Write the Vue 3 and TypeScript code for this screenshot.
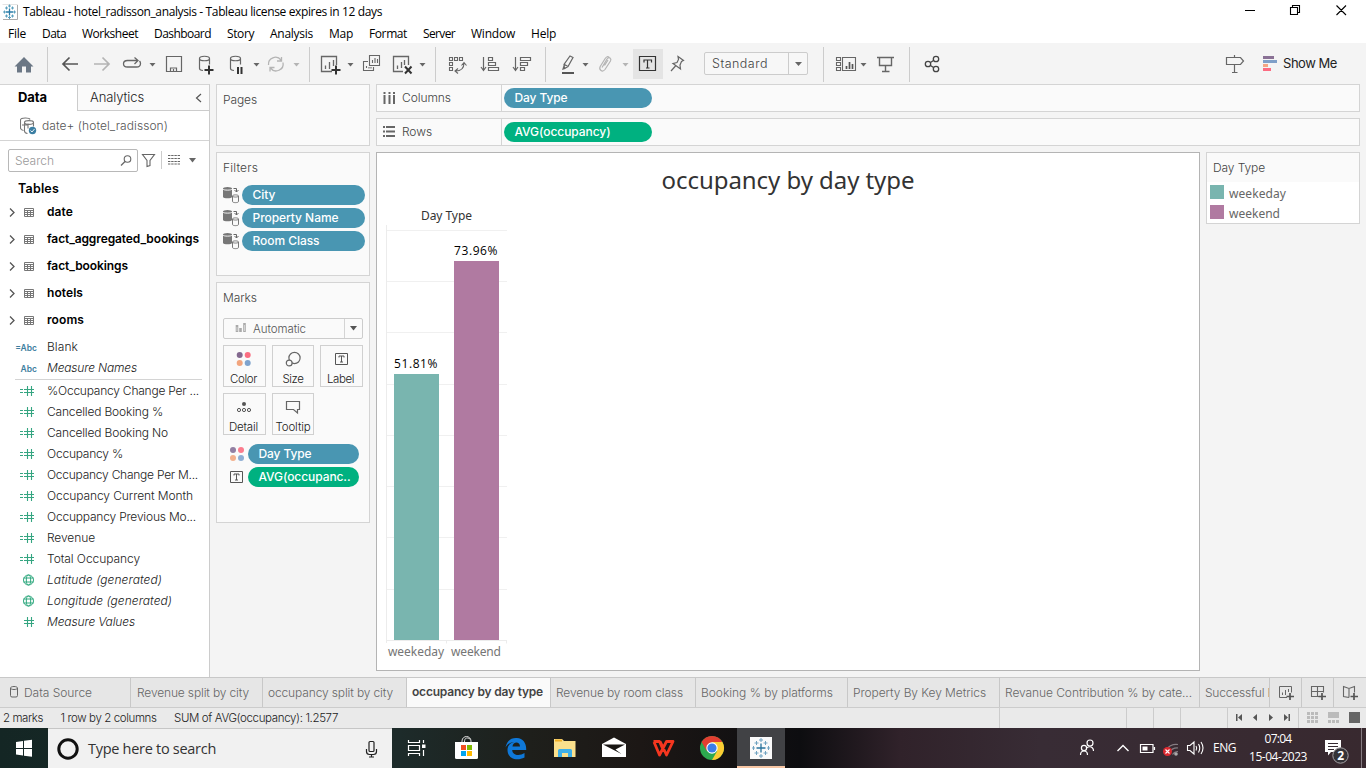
<script setup lang="ts">
import { h, type Directive, type FunctionalComponent } from 'vue'

/** Inline SVG whose element size equals its viewBox size. */
const Pic: FunctionalComponent<{ b: string }> = (props, { slots }) => {
  const [, , w, ht] = props.b.split(' ')
  return h('svg', { viewBox: props.b, width: w, height: ht, fill: 'none', 'aria-hidden': 'true' }, slots.default?.())
}
Pic.props = ['b']

/** Tracks the letters of a single-line text so that it fills the given width. */
const vFit: Directive<HTMLElement, number> = {
  mounted(el, { value }) {
    const len = (el.textContent ?? '').length
    if (!value || len < 2) return
    const natural = el.getBoundingClientRect().width
    el.style.letterSpacing = `${(value - natural) / len}px`
  },
}

const menus: [string, number][] = [
  ['File', 18], ['Data', 24], ['Worksheet', 56], ['Dashboard', 57], ['Story', 27],
  ['Analysis', 43], ['Map', 24], ['Format', 38], ['Server', 32], ['Window', 44], ['Help', 25],
]

const tables: [string, number][] = [
  ['date', 26], ['fact_aggregated_bookings', 152], ['fact_bookings', 81], ['hotels', 36], ['rooms', 37],
]

interface Field { name: string; w: number; kind: string; gen?: boolean }
const dims: Field[] = [
  { name: 'Blank', w: 31, kind: '=Abc' },
  { name: 'Measure Names', w: 90, kind: 'Abc', gen: true },
]
const measures: Field[] = [
  { name: '%Occupancy Change Per ...', w: 152, kind: 'calc' },
  { name: 'Cancelled Booking %', w: 116, kind: 'calc' },
  { name: 'Cancelled Booking No', w: 121, kind: 'calc' },
  { name: 'Occupancy %', w: 76, kind: 'calc' },
  { name: 'Occupancy Change Per M...', w: 151, kind: 'calc' },
  { name: 'Occupancy Current Month', w: 146, kind: 'calc' },
  { name: 'Occuppancy Previous Mo...', w: 149, kind: 'calc' },
  { name: 'Revenue', w: 48, kind: 'calc' },
  { name: 'Total Occupancy', w: 93, kind: 'calc' },
  { name: 'Latitude (generated)', w: 115, kind: 'geo', gen: true },
  { name: 'Longitude (generated)', w: 125, kind: 'geo', gen: true },
  { name: 'Measure Values', w: 88, kind: 'num', gen: true },
]

const filters: [string, number][] = [['City', 23], ['Property Name', 86], ['Room Class', 67]]

const tabs: { t: string; w: number; tw: number; on?: boolean }[] = [
  { t: 'Revenue split by city', w: 132, tw: 112 },
  { t: 'occupancy split by city', w: 144, tw: 125 },
  { t: 'occupancy by day type', w: 144, tw: 131, on: true },
  { t: 'Revenue by room class', w: 145, tw: 127 },
  { t: 'Booking % by platforms', w: 152, tw: 132 },
  { t: 'Property By Key Metrics', w: 152, tw: 133 },
  { t: 'Revanue Contribution % by cate...', w: 200, tw: 187 },
]

const top = 230
const base = 640
const grid = Array.from({ length: 8 }, (_, i) => Math.round(top + (i * (base - top)) / 8 - 0.1) + 0.5)
const bars = [
  { name: 'weekeday', label: '51.81%', x: 394, y: 374, fill: '#79b5af', nx: 388, nw: 56 },
  { name: 'weekend', label: '73.96%', x: 454, y: 261, fill: '#b07aa1', nx: 451, nw: 50 },
]
</script>

<template>
  <div class="app">
    <header class="title">
      <Pic b="2 3 17 16">
        <path d="M2.500 3.500h15v15" stroke="#e4e4e4" /><path d="M3 18.500h14.500V4" stroke="#aaa" />
        <path d="M9.500 7.500v7M6 11h7" stroke="#2a7ca8" stroke-width="1.300" />
        <path d="M9.500 3.500v3M8 5h3M9.500 15v3M8 16.500h3M3 11h3M4.500 9.500v3M13 11h3M14.500 9.500v3M5 7h3M6.500 5.500v3M11 7h3M12.500 5.500v3M5 15h3M6.500 13.500v3M11 15h3M12.500 13.500v3" stroke="#5ba0be" />
      </Pic>
      <span class="title-text"><span v-fit="359">Tableau - hotel_radisson_analysis - Tableau license expires in 12 days</span></span>
      <Pic b="1236 0 130 23">
        <path d="M1245 10.500h10M1290.500 7.500h7v7h-7zM1292.500 7.500v-2h7v7h-2M1336.500 5.500l9.500 9.500M1346 5.500l-9.500 9.500" stroke="#000" stroke-width="1.100" />
      </Pic>
    </header>
    <nav class="menu">
      <span v-for="m in menus" :key="m[0]" class="menu-item"><span v-fit="m[1]">{{ m[0] }}</span></span>
    </nav>

    <div class="toolbar">
      <Pic b="0 43 48 41"><path d="M24 57l9.500 9.500H31V72.500h-5v-6h-4v6h-5v-6h-2.500z" fill="#6b7785" /><path d="M47.500 47v35" stroke="#ccc" /></Pic>
      <Pic b="48 43 36 41"><path d="M78 64H63M69.500 57.500L63 64l6.500 6.500" stroke="#555" stroke-width="1.700" /></Pic>
      <Pic b="84 43 34 41"><path d="M94 64h15M102.500 57.500L109 64l-6.500 6.500" stroke="#b4b4b4" stroke-width="1.700" /></Pic>
      <Pic b="118 43 42 41"><path d="M137 60.500h-9.500q-4 0-4 3.200t4 3.300h9q4 0 4-3.500 0-1.500-1-2.500M134.500 57.500l3.500 3-3.500 3.500" stroke="#666" stroke-width="1.300" /><path d="M149.500 63h6l-3 3.500z" fill="#666" /></Pic>
      <Pic b="160 43 30 41"><path d="M166.500 56.500h15v15h-15zM170.500 71v-3h6v3M173.500 69v3" stroke="#666" stroke-width="1.200" /></Pic>
      <Pic b="190 43 34 41"><path d="M203 70.500q-3.500-.3-3.500-2v-10c0-3 10-3 10 0v6M199.500 58.500c0 3 10 3 10 0" stroke="#666" stroke-width="1.200" /><path d="M209 65.500v9M204.500 70h9" stroke="#333" stroke-width="2" /></Pic>
      <Pic b="224 43 39 41"><path d="M234 70.500q-3.500-.3-3.500-2v-10c0-3 10-3 10 0v6M230.500 58.500c0 3 10 3 10 0" stroke="#666" stroke-width="1.200" /><path d="M238 67v7M241.500 67v7" stroke="#333" stroke-width="2" /><path d="M253.500 63h6l-3 3.500z" fill="#666" /></Pic>
      <Pic b="263 43 47 41"><path d="M268.500 65a7 7 0 0 1 12.500-5M283 62.500a7 7 0 0 1-12.500 5.500M281.500 57v4h-4.500M270 71.500v-4h4.500" stroke="#b4b4b4" stroke-width="1.300" /><path d="M293.500 63h6l-3 3.500z" fill="#b4b4b4" /><path d="M309.500 47v35" stroke="#ccc" /></Pic>
      <Pic b="310 43 48 41"><path d="M332 71.500h-10.500v-15h15V65M325.500 69v-3.500M329.500 69v-7M333.500 66v-6" stroke="#666" stroke-width="1.300" /><path d="M336 65.500v9M331.500 70h9" stroke="#333" stroke-width="2" /><path d="M347.500 63h6l-3 3.500z" fill="#666" /></Pic>
      <Pic b="358 43 30 41"><path d="M369.500 55.500h10v10h-10zM368 61.500h-4.500v9h10v-3.500M372.500 63v-3M375 63v-5M377.500 63v-4M366.500 68v-2M369 68.500v-1.500M371 68.500v-1.500" stroke="#666" stroke-width="1.100" /></Pic>
      <Pic b="388 43 48 41"><path d="M403 71.500h-9.500v-15h15V65M397.500 69v-3.500M401.500 68v-6M404.500 65v-5" stroke="#666" stroke-width="1.300" /><path d="M405 66.500l6.500 7M411.500 66.500l-6.500 7" stroke="#333" stroke-width="2" /><path d="M419.500 63h6l-3 3.500z" fill="#666" /><path d="M435.500 47v35" stroke="#ccc" /></Pic>
      <Pic b="436 43 38 41"><path d="M449.500 57.500h3v3h-3zM454.500 57.500h3v3h-3zM459.500 57.500h3v3h-3zM449.500 62.500h3v3h-3zM449.500 67.500h3v3h-3zM464 63q0 8-8.500 8M461.500 65.500l2.500-3 2.500 3M458 68.500l-3 2.500 3 2.500" stroke="#666" stroke-width="1.100" /></Pic>
      <Pic b="474 43 33 41"><path d="M483.500 57v13M481 67l2.500 3.500 2.500-3.500M488.500 57.500h4v3h-4zM488.500 62.500h7v3h-7zM488.500 67.500h10v3h-10z" stroke="#666" stroke-width="1.200" /></Pic>
      <Pic b="507 43 39 41"><path d="M515.500 57v13M513 67l2.500 3.500 2.500-3.500M520.500 57.500h10v3h-10zM520.500 62.500h7v3h-7zM520.500 67.500h4v3h-4z" stroke="#666" stroke-width="1.200" /><path d="M545.500 47v35" stroke="#ccc" /></Pic>
      <Pic b="546 43 48 41"><path d="M570 56l3 1.500-5 9-3.500 2-.5-4zM564.500 64.500l3.500 2M564 66l-1 3 3-1" stroke="#666" stroke-width="1.200" /><path d="M562 73h12" stroke="#555" stroke-width="2" /><path d="M582.500 63h6l-3 3.500z" fill="#666" /></Pic>
      <Pic b="594 43 38 41"><path d="M602 67.500l5-8.500q1.500-2 3-1 1.500 1.200.5 3l-5.500 8.500q-2 2.500-4 1t-.8-4l5-8q2-3 4-1M604.500 65.500l3.500-5.500" stroke="#b4b4b4" stroke-width="1.200" /><path d="M622.500 63h6l-3 3.500z" fill="#b4b4b4" /></Pic>
      <Pic b="632 43 32 41"><path d="M633 49h30v30h-30z" fill="#e4e4e4" /><path d="M639.500 56.500h16v14h-16z" stroke="#333" stroke-width="1.200" /><path d="M644 62.500v-2.500h7.500v2.500M647.500 60v8M646 68h3.500" stroke="#333" stroke-width="1.200" /></Pic>
      <Pic b="664 43 40 41"><path d="M678 56.500l5.500 4-2 1-1.500 3.500.5 4-7.500-5.500 4-1 1.500-3zM675.500 66l-4.500 5" stroke="#666" stroke-width="1.200" /></Pic>
      <div class="select"><span class="select-text"><span v-fit="56">Standard</span></span><span class="select-btn"><Pic b="0 0 7 4"><path d="M0 0h7l-3.500 4z" fill="#666" /></Pic></span></div>
      <Pic b="808 43 62 41"><path d="M823.500 47v35" stroke="#ccc" /><path d="M836.500 57.500h4v3h-4zM836.500 62.500h4v3h-4zM836.500 67.500h4v3h-4zM842.500 57.500h13v13h-13z" stroke="#666" stroke-width="1.100" /><path d="M846.500 69v-3M849.500 69v-7M852.500 69v-5" stroke="#555" stroke-width="1.700" /><path d="M860.500 63h6l-3 3.500z" fill="#666" /></Pic>
      <Pic b="870 43 40 41"><path d="M877 57.500h17M879.500 58v7.500h12V58M885.500 66v5.500M882 71.500h7.500" stroke="#666" stroke-width="1.400" /><path d="M909.500 47v35" stroke="#ccc" /></Pic>
      <Pic b="910 43 40 41"><circle cx="928" cy="64" r="2.700" stroke="#444" stroke-width="1.300" /><circle cx="936" cy="59" r="2.700" stroke="#444" stroke-width="1.300" /><circle cx="936" cy="69" r="2.700" stroke="#444" stroke-width="1.300" /><path d="M930.500 62.500l3-2M930.500 65.500l3 2" stroke="#444" stroke-width="1.300" /></Pic>
      <span class="spacer"></span>
      <Pic b="1216 43 67 41"><path d="M1226.500 57.500h14l3 3.500-3 3.500h-14zM1234.500 55v2M1234.500 65v7.500M1232 72.500h5.500" stroke="#666" stroke-width="1.200" /><path d="M1263 56h11v3h-11z" fill="#8a7195" /><path d="M1263 60h14v3h-14z" fill="#7f9fc8" /><path d="M1263 64h5v3h-5z" fill="#f3a583" /><path d="M1263 68h8v3h-8z" fill="#fc6b81" /></Pic>
      <span class="show-me"><span v-fit="54">Show Me</span></span>
    </div>

    <main class="work">
      <aside class="side">
        <div class="side-tabs">
          <div class="side-tab on"><span v-fit="29">Data</span></div>
          <div class="side-tab off"><span v-fit="54">Analytics</span><Pic b="195 92 7 10"><path d="M201 93l-4.500 4 4.500 4" stroke="#555" stroke-width="1.200" /></Pic></div>
        </div>
        <div class="source">
          <Pic b="20 116 17 18">
            <path d="M20.500 119v8q0 2 3 2.500M20.500 119c0-2.500 9-2.500 9.500-.5M24.500 122v8q0 2 3 2.500M24.500 121.500c0-2.500 9-2.500 9 0v4M24.500 121.500c0 2.500 9 2.500 9 0M22 124h6M28 122.500v5" stroke="#777" stroke-width="1.100" />
            <circle cx="32.500" cy="129.500" r="3.700" fill="#3c7fa3" /><path d="M30.500 129.500l1.500 1.500 2.500-3" stroke="#fff" stroke-width=".9" />
          </Pic>
          <span v-fit="126">date+ (hotel_radisson)</span>
        </div>
        <div class="search-row">
          <div class="search"><span v-fit="39">Search</span><Pic b="120 155 12 11"><circle cx="127.500" cy="159" r="3.300" stroke="#666" stroke-width="1.100" /><path d="M125 161.500l-4 4" stroke="#666" stroke-width="1.200" /></Pic></div>
          <Pic b="138 149 71 22">
            <path d="M142.500 154.500h12l-4.500 6v5l-3 1v-6z" stroke="#666" stroke-width="1.100" /><path d="M161.500 151v18" stroke="#ccc" />
            <path d="M168 155.500h12M168 158.500h12M168 161.500h12M168 164h12" stroke="#666" stroke-dasharray="2.400 .8" /><path d="M189 158h7l-3.500 4.500z" fill="#666" />
          </Pic>
        </div>
        <div class="tables-head"><span v-fit="41">Tables</span></div>
        <div v-for="t in tables" :key="t[0]" class="table-row">
          <Pic b="0 0 47 27"><path d="M10 10.500l4 4-4 4" stroke="#555" stroke-width="1.300" /><path d="M24.500 10.500h9v8h-9zM24.500 12.500h9M24.500 14.500h9M24.500 16.500h9M27.500 12.500v6M30.500 12.500v6" stroke="#777" /></Pic>
          <span v-fit="t[1]">{{ t[0] }}</span>
        </div>
        <div class="dims">
          <div v-for="f in dims" :key="f.name" class="field" :class="{ gen: f.gen }">
            <span class="kind">{{ f.kind }}</span><span v-fit="f.w">{{ f.name }}</span>
          </div>
        </div>
        <div v-for="f in measures" :key="f.name" class="field" :class="{ gen: f.gen }">
          <Pic b="0 0 47 21">
            <template v-if="f.kind === 'geo'"><circle cx="28.500" cy="11" r="5" stroke="#2fa87e" /><ellipse cx="28.500" cy="11" rx="2.200" ry="5" stroke="#2fa87e" /><path d="M23.500 9h10M23.500 13h10" stroke="#2fa87e" /></template>
            <template v-else><path d="M24 9.500h10M24 12.500h10M27.500 6v10M31.500 6v10" stroke="#35a581" stroke-width="1.100" /><path v-if="f.kind === 'calc'" d="M20 9.500h3M20 12.500h3" stroke="#35a581" /></template>
          </Pic>
          <span v-fit="f.w">{{ f.name }}</span>
        </div>
      </aside>

      <section class="cards">
        <div class="card pages"><h3><span v-fit="34">Pages</span></h3></div>
        <div class="card filters">
          <h3><span v-fit="35">Filters</span></h3>
          <div v-for="f in filters" :key="f[0]" class="pill-row">
            <Pic b="222 185 20 20"><path d="M223 188.500v8.500c0 1.700 9 1.700 9 0V188.500z" fill="#777" /><ellipse cx="227.500" cy="188.500" rx="4.500" ry="1.600" fill="#777" /><path d="M223 189c0 1.500 9 1.500 9 0" stroke="#fff" stroke-width=".9" /><path d="M232.500 196v5.500c0 1.500 6 1.500 6 0V196c0-1.500-6-1.500-6 0c0 1.400 6 1.400 6 0" fill="#fafafa" stroke="#777" /><path d="M233.500 188.500h3v3.500M234.500 190l2 2 2-2" stroke="#666" /></Pic>
            <span class="pill blue"><span v-fit="f[1]">{{ f[0] }}</span></span>
          </div>
        </div>
        <div class="card marks">
          <h3><span v-fit="34">Marks</span></h3>
          <div class="mark-select">
            <Pic b="235 323 12 11"><path d="M237 325v7M240.500 328v4M244.500 323v9" stroke="#aaa" stroke-width="2.600" /><path d="M237 327v4M244.500 325v6" stroke="#ddd" stroke-width=".8" /></Pic>
            <span class="mark-name"><span v-fit="53">Automatic</span></span>
            <span class="mark-caret"><Pic b="0 0 7 5"><path d="M0 0h7l-3.500 4.500z" fill="#555" /></Pic></span>
          </div>
          <div class="mark-grid">
            <div class="mark"><Pic b="0 0 16 16"><circle cx="3.700" cy="4" r="3" fill="#83698f" /><circle cx="11.700" cy="4" r="3" fill="#fb6e82" /><circle cx="3.700" cy="12" r="3" fill="#f2a57e" /><circle cx="11.700" cy="12" r="3" fill="#7fa3cd" /></Pic><span v-fit="27">Color</span></div>
            <div class="mark"><Pic b="0 0 16 16"><circle cx="9.500" cy="7" r="5.600" stroke="#666" stroke-width="1.200" /><circle cx="4.200" cy="12" r="2.900" fill="#fafafa" stroke="#666" stroke-width="1.200" /></Pic><span v-fit="21">Size</span></div>
            <div class="mark"><Pic b="0 0 16 16"><path d="M2.500 2.500h12v11h-12zM6 6.500v-1.500h5v1.500M8.500 5v6M7 11h3" stroke="#555" /></Pic><span v-fit="27">Label</span></div>
            <div class="mark"><Pic b="0 0 16 16"><circle cx="8" cy="5" r="2" fill="#555" /><circle cx="3" cy="11" r="1.600" stroke="#555" /><circle cx="8" cy="11" r="1.600" stroke="#555" /><circle cx="13" cy="11" r="1.600" stroke="#555" /></Pic><span v-fit="29">Detail</span></div>
            <div class="mark"><Pic b="0 0 16 16"><path d="M1.500 2.500h13v8h-2v3.500l-4-3.500h-7z" stroke="#666" stroke-width="1.200" /></Pic><span v-fit="35">Tooltip</span></div>
          </div>
          <div class="pill-row mark-pill">
            <Pic b="-2 0 20 20"><circle cx="3" cy="6" r="3" fill="#927fa2" /><circle cx="11" cy="6" r="3" fill="#fb7c8d" /><circle cx="3" cy="14" r="3" fill="#f3b08d" /><circle cx="11" cy="14" r="3" fill="#8eaed4" /></Pic>
            <span class="pill blue"><span v-fit="53">Day Type</span></span>
          </div>
          <div class="pill-row mark-pill">
            <Pic b="-2 0 20 20"><path d="M.5 4.500h12v11H.5zM4 8.500V7h5v1.500M6.500 7v6M5 13h3" stroke="#555" /></Pic>
            <span class="pill green"><span v-fit="92">AVG(occupanc..</span></span>
          </div>
        </div>
      </section>

      <section class="canvas">
        <div class="shelf">
          <div class="shelf-name"><Pic b="0 0 14 14"><path d="M2.500 1v2M7.500 1v2M12 1v2M2.500 4v9M7.500 4v9M12 4v9" stroke="#666" stroke-width="2" /></Pic><span v-fit="49">Columns</span></div>
          <span class="pill blue"><span v-fit="53">Day Type</span></span>
        </div>
        <div class="shelf">
          <div class="shelf-name"><Pic b="0 0 14 14"><path d="M1 2h2M1 6.500h2M1 11h2M4 2h9M4 6.500h9M4 11h9" stroke="#666" stroke-width="2" /></Pic><span v-fit="30">Rows</span></div>
          <span class="pill green"><span v-fit="96">AVG(occupancy)</span></span>
        </div>
        <div class="view-row">
          <div class="view">
            <h1><span v-fit="253">occupancy by day type</span></h1>
            <Pic b="377 206 140 464">
              <path v-for="g in grid" :key="g" :d="`M386 ${g}H507`" stroke="#f0f0f0" />
              <path d="M386.500 225v418M386 640.500h121M446.500 640v3.500M506.500 640v3.500" stroke="#ececec" />
              <text class="head" x="421" y="220" textLength="51">Day Type</text>
              <g v-for="b in bars" :key="b.name">
                <rect :x="b.x" :y="b.y" width="45" :height="base - b.y" :fill="b.fill" />
                <text class="val" :x="b.x" :y="b.y - 6" textLength="43.500">{{ b.label }}</text>
                <text class="axis" :x="b.nx" y="656" :textLength="b.nw">{{ b.name }}</text>
              </g>
            </Pic>
          </div>
          <div class="legend">
            <h3><span v-fit="52">Day Type</span></h3>
            <div class="legend-item"><i class="sw teal"></i><span v-fit="57">weekeday</span></div>
            <div class="legend-item"><i class="sw mauve"></i><span v-fit="51">weekend</span></div>
          </div>
        </div>
      </section>
    </main>

    <div class="tabs">
      <div class="tab ds"><Pic b="9 686 10 13"><path d="M10.500 688v7.500q0 1.500 1.500 1.500h4q1.500 0 1.500-1.500V688c0-2-7-2-7 0c0 2 7 2 7 0" stroke="#666" /></Pic><span v-fit="68">Data Source</span></div>
      <div v-for="t in tabs" :key="t.t" class="tab" :class="{ on: t.on }" :style="{ width: t.w + 'px' }"><span v-fit="t.tw">{{ t.t }}</span></div>
      <div class="tab last"><span v-fit="70">Successful B</span></div>
      <div class="tab new"><Pic b="1270 678 31 29"><path d="M1287 697.500h-7.500v-11h12v6M1282.500 695v-2.500M1285.500 695v-5M1288.500 692v-3" stroke="#666" /><path d="M1290 693v7M1286.500 696.500h7.500" stroke="#555" stroke-width="1.700" /></Pic></div>
      <div class="tab new"><Pic b="1302 678 31 29"><path d="M1319 696.500h-7.500v-10h12v6M1311.500 691.500h12M1317.500 686.500v10" stroke="#666" stroke-width="1.100" /><path d="M1322 693v7M1318.500 696.500h7.500" stroke="#555" stroke-width="1.700" /></Pic></div>
      <div class="tab new"><Pic b="1334 678 32 29"><path d="M1349 697.500l-5.500-1v-10l5.500 2 5.500-2v6M1349 688v9.500" stroke="#666" stroke-width="1.100" /><path d="M1354 693v7M1350.500 696.500h7.500" stroke="#555" stroke-width="1.700" /></Pic></div>
    </div>

    <div class="status">
      <span class="st"><span v-fit="40">2 marks</span></span>
      <span class="st"><span v-fit="96">1 row by 2 columns</span></span>
      <span class="st"><span v-fit="164">SUM of AVG(occupancy): 1.2577</span></span>
      <span class="spacer"></span>
      <Pic b="996 708 370 20">
        <path d="M999.500 708v20M1126.500 708v20M1153.500 708v20M1180.500 708v20M1227.500 708v20M1298.500 708v20" stroke="#ccc" />
        <path d="M1236 714h1.500v7h-1.500zM1242 714v7l-4-3.500zM1257 714v7l-4-3.500zM1269 714v7l4-3.500zM1284 714v7l4-3.500zM1288.500 714h1.500v7h-1.500z" fill="#555" />
        <path d="M1307 713.500h11M1307 717.500h11M1307 721.500h11" stroke="#bbb" stroke-width="3" stroke-dasharray="3 1" />
        <path d="M1328 712h11v6h-11z" fill="#bbb" /><path d="M1328 721.500h11" stroke="#bbb" stroke-width="3" stroke-dasharray="3 1" />
        <path d="M1349 712h11v11h-11z" fill="#666" />
      </Pic>
    </div>

    <footer class="taskbar">
      <Pic b="0 728 48 40"><path d="M16 742l7-1v7h-7zM24 740.800l8-1.100v8.300h-8zM16 749h7v6.500l-7-1zM24 749h8v7.800l-8-1.100z" fill="#fff" /></Pic>
      <div class="tb-search">
        <Pic b="48 728 40 40"><circle cx="68" cy="748" r="9.200" stroke="#111" stroke-width="3" /></Pic>
        <span v-fit="128">Type here to search</span>
        <Pic b="352 728 40 40"><rect x="369" y="740.500" width="5" height="10" rx="1" stroke="#222" stroke-width="1.200" /><path d="M366.500 748v2.500q0 3 3 3h4q3 0 3-3V748M371.500 753.500v3M369 756h5" stroke="#222" stroke-width="1.200" /></Pic>
      </div>
      <Pic b="392 728 49 40"><path d="M408.500 740v2.500h11V740M408.500 756v-2.500h11v2.500M408.500 745.500h11v5h-11zM423.500 740v3M423.500 750v6" stroke="#fff" stroke-width="1.200" /><path d="M422 744.500h3.500v3.500H422z" fill="#fff" /></Pic>
      <Pic b="441 728 49 40"><path d="M462 743v-2c0-3 2.500-4.500 4.500-4.500s4.500 1.500 4.500 4.500v2M464.500 742c0-4 2-5 5.500-3" stroke="#ddd" /><path d="M455 742h23v15.500q0 1.500-1.500 1.500h-20q-1.500 0-1.500-1.500z" fill="#fff" /><path d="M461 745h5v5h-5z" fill="#f25022" /><path d="M467 745h5v5h-5z" fill="#7fba00" /><path d="M461 751h5v5h-5z" fill="#00a4ef" /><path d="M467 751h5v5h-5z" fill="#ffb900" /></Pic>
      <Pic b="490 728 49 40"><path d="M505.500 747.500C507 740 512 737.500 517 738c6 .5 9.500 5 9.200 12h-14c.3 6 8 6 12.300 3v4.500c-8 4-17 1-17-7.500 0-4 2.500-7 6.500-8-3.500.2-6.500 2-8.500 5.500zM512.500 746.500h7.500c0-5.500-7-5.500-7.500 0z" fill="#0f78d8" fill-rule="evenodd" /></Pic>
      <Pic b="539 728 49 40"><path d="M554 739h8l2 2h11.500v16H554z" fill="#fbe08c" /><path d="M555 739.500h7v2h-7z" fill="#f0ae24" /><path d="M558 750.500q0-1.500 1.500-1.500h11q1.500 0 1.500 1.500V757h-4v-4h-6v4h-4z" fill="#3fb0e8" /></Pic>
      <Pic b="588 728 49 40"><path d="M602 744l12-6.500 12 6.500v13h-24z" fill="#fff" /><path d="M603 744.500h22l-9.500 5 6 4.500z" fill="#181513" /></Pic>
      <Pic b="637 728 50 40"><path d="M653.500 741.500h6l3.500 8M654 742l5.500 13 7-13.500h6.500l-6.500 13.500-3.500-7.500M660 741.500l2.500 5" stroke="#f5361f" stroke-width="2.800" stroke-linejoin="round" /></Pic>
      <Pic b="687 728 50 40"><circle cx="712" cy="748" r="12" fill="#2da94f" /><path d="M701.600 742A12 12 0 0 1 722.400 742H712l-5.200 9z" fill="#e23e31" /><path d="M722.400 742A12 12 0 0 1 712 760l5.200-9-5.200-9z" fill="#fccc33" /><circle cx="712" cy="748" r="5.700" fill="#fff" /><circle cx="712" cy="748" r="4.600" fill="#3b7de9" /></Pic>
      <div class="tb-active">
        <Pic b="737 728 48 37"><path d="M750 737h22v22h-22z" fill="#fafafa" /><path d="M761 743.500v9M756.500 748h9" stroke="#28739c" stroke-width="1.300" /><path d="M761 738v4M759 740h4M761 754v4M759 756h4M752 748h3M753.500 746v4M767 748h3M768.500 746v4M754.500 743h4M756.500 741v4M763.500 743h4M765.500 741v4M754.500 753h4M756.500 751v4M763.500 753h4M765.500 751v4" stroke="#6fa2c0" /></Pic>
      </div>
      <span class="spacer"></span>
      <Pic b="1072 728 140 40">
        <circle cx="1090" cy="743" r="3" stroke="#fff" stroke-width="1.200" /><circle cx="1084" cy="748" r="2.600" stroke="#fff" stroke-width="1.200" /><path d="M1080.500 755q0-4 3.500-4t3.500 4M1086.500 748q3.500-2.500 6 0 1 1 1 3" stroke="#fff" stroke-width="1.200" />
        <path d="M1117.500 751l5.500-5.500 5.500 5.500" stroke="#fff" stroke-width="1.400" />
        <path d="M1140.500 744.500h12.500v8h-12.500zM1154.500 747v3" stroke="#fff" stroke-width="1.200" /><path d="M1142.500 746.500h5v4h-5z" fill="#fff" />
        <path d="M1165 751a12.500 12.500 0 0 1 13-6.500M1169 753a9.500 9.500 0 0 1 9-5M1172.500 754.500q2-3 5.500-3" stroke="#867d83" stroke-width="1.200" /><circle cx="1176" cy="754" r="1.800" fill="#aaa" /><circle cx="1167.500" cy="751.500" r="4.500" fill="#dc2930" /><path d="M1165.500 749.500l4 4M1169.500 749.500l-4 4" stroke="#fff" stroke-width="1.100" />
        <path d="M1187.500 745.500h2.500l4-3.500v12l-4-3.500h-2.500zM1196 746q1.500 2 0 4.500M1198.500 744q2.500 4 0 8.500M1201 742q4 6 0 12" stroke="#fff" stroke-width="1.100" />
      </Pic>
      <span class="lang"><span v-fit="23">ENG</span></span>
      <div class="clock"><span v-fit="27">07:04</span><span v-fit="58">15-04-2023</span></div>
      <div class="notice">
        <Pic b="1320 728 46 40"><path d="M1325 740h16v12h-10l-3 3.500V752h-3z" fill="#fff" /><path d="M1328 743.500h10M1328 746.500h10M1328 749.500h6" stroke="#352a32" /><circle cx="1340.500" cy="755.500" r="7.700" fill="#343338" stroke="#a5a1a4" /><path d="M1361.500 728v40" stroke="#857b81" /><text class="count" x="1337.300" y="760">2</text></Pic>
      </div>
    </footer>
  </div>
</template>

<style>
body { background: #fff; overflow: hidden; }
</style>

<style scoped>
.app { width: 1366px; height: 768px; display: flex; flex-direction: column; overflow: hidden; background: #f4f4f4; color: #333; font: 300 12px/16px Inter, "Open Sans", sans-serif; white-space: nowrap; }
.app * { box-sizing: border-box; }
.app svg { flex: none; display: block; }
.spacer { flex: 1; }
h1, h3 { margin: 0; font-weight: inherit; font-size: inherit; }

.title, .menu { background: #fff; color: #000; font: 400 12px/16px "Open Sans", sans-serif; display: flex; }
.title { height: 23px; align-items: center; padding-left: 2px; }
.title-text { flex: 1; padding-left: 4px; }
.menu { height: 20px; padding: 3px 0 0 8px; gap: 16px; }

.toolbar { height: 41px; display: flex; }
.select { display: flex; width: 104px; height: 23px; margin-top: 9px; border: 1px solid #ccc; border-radius: 2px; background: #f7f7f7; font-size: 12.500px; line-height: 21px; color: #444; }
.select-text { flex: 1; padding-left: 7px; }
.select-btn { width: 19px; border-left: 1px solid #ccc; display: flex; align-items: center; justify-content: center; }
.show-me { width: 83px; font-size: 13px; font-weight: 400; line-height: 41px; color: #222; }

.work { height: 593px; display: flex; align-items: flex-start; }
.side { width: 210px; height: 593px; background: #fff; border-right: 1px solid #ccc; border-top: 1px solid #d4d4d4; color: #222; }
.side-tabs { display: flex; height: 26px; font-size: 13px; line-height: 25px; }
.side-tab.on { width: 77px; padding-left: 18px; font-weight: 700; color: #000; }
.side-tab.off { flex: 1; padding: 0 7px 0 12px; background: #fafafa; border-left: 1px solid #ccc; border-bottom: 1px solid #ccc; display: flex; align-items: center; justify-content: space-between; }
.source { height: 30px; display: flex; align-items: center; gap: 5px; padding-left: 20px; border-bottom: 1px solid #d4d4d4; color: #555; }
.search-row { display: flex; height: 23px; margin-top: 8px; padding-left: 8px; }
.search { width: 130px; display: flex; justify-content: space-between; align-items: center; padding: 0 5px 0 6px; border: 1px solid #b8b8b8; border-radius: 2px; color: #999; }
.tables-head { height: 26px; padding: 9px 0 0 18px; font-size: 12.500px; font-weight: 600; color: #000; }
.table-row { display: flex; height: 27px; align-items: center; font-weight: 600; color: #000; }
.dims { padding-top: 3px; height: 47px; margin: 0 7px 0 15px; border-bottom: 1px solid #d4d4d4; }
.dims .field { margin-left: -15px; }
.field { display: flex; height: 21px; align-items: center; }
.gen { font-style: italic; }
.kind { width: 47px; padding: 2px 10px 0 0; text-align: right; font-size: 8.500px; font-weight: 600; font-style: normal; color: #3f7f9f; }

.cards { width: 154px; margin-left: 6px; display: flex; flex-direction: column; gap: 6px; }
.card, .shelf, .legend { background: #fafafa; border: 1px solid #d4d4d4; }
.card h3 { padding: 7px 0 0 6px; color: #444; }
.pages { height: 62px; }
.filters { height: 124px; }
.marks { height: 241px; }
.pill-row { display: flex; height: 20px; margin: 0 4px 3px 5px; }
.filters h3 { margin-bottom: 9px; }
.pill { flex: 1; height: 20px; padding-left: 10.500px; border-radius: 10px; color: #fff; font-weight: 500; line-height: 20px; }
.blue { background: #4996b2; }
.green { background: #00b180; }
.mark-select { display: flex; align-items: center; width: 140px; height: 21px; margin: 12px 0 0 6px; padding-left: 11px; border: 1px solid #ccc; border-radius: 2px; color: #555; font-size: 11.500px; }
.mark-name { flex: 1; padding-left: 6px; }
.mark-caret { width: 18px; height: 19px; border-left: 1px solid #d4d4d4; display: flex; align-items: center; justify-content: center; }
.mark-grid { display: grid; grid-template-columns: 43px 42px 43px; grid-auto-rows: 42px; gap: 6px; margin: 6px 0 9px 6px; }
.mark { border: 1px solid #d0d0d0; display: flex; flex-direction: column; align-items: center; padding: 5px 2px 0 0; font-size: 11.500px; color: #222; }
.mark:nth-child(3n + 2) { padding-right: 0; }
.mark span { margin-top: 4px; }
.mark-pill { margin: 0 10px 3px 11px; }

.canvas { width: 984px; margin-left: 6px; display: flex; flex-direction: column; gap: 6px; }
.shelf { height: 28px; display: flex; align-items: center; }
.shelf .pill { flex: none; width: 148px; margin-left: 2px; }
.shelf-name { width: 125px; height: 26px; display: flex; align-items: center; padding-left: 5px; gap: 6px; border-right: 1px solid #d4d4d4; color: #444; }
.view-row { display: flex; align-items: flex-start; gap: 6px; }
.view { width: 824px; height: 519px; background: #fff; border: 1px solid #b4b4b4; }
.view h1 { height: 53px; text-align: center; font: 400 24px/53px "Noto Sans", "Open Sans", sans-serif; color: #333; }
.head { font: 400 12px "Noto Sans", sans-serif; fill: #333; }
.val { font: 400 12px "Open Sans", sans-serif; fill: #000; }
.axis { font: 400 12px "Noto Sans", sans-serif; fill: #757575; }
.legend { width: 154px; height: 72px; background: #fff; color: #444; }
.legend h3 { height: 29px; padding: 7px 0 0 6px; background: #fafafa; }
.legend-item { display: flex; align-items: center; height: 20px; padding-left: 3px; gap: 5px; font-family: "Noto Sans", sans-serif; font-weight: 400; color: #666; }
.legend-item span { padding-top: 3px; }
.sw { width: 14px; height: 14px; }
.teal { background: #79b5af; }
.mauve { background: #b07aa1; }

.tabs { height: 31px; display: flex; border-top: 1px solid #c8c8c8; border-bottom: 1px solid #ccc; background: #e6e6e6; color: #666; line-height: 29px; }
.tab { flex: none; padding-left: 5px; border-right: 1px solid #c8c8c8; overflow: hidden; }
.tab.on { background: #fafafa; color: #444; font-weight: 600; line-height: 28px; }
.tab.ds { width: 131px; display: flex; align-items: center; gap: 5px; padding-left: 9px; }
.tab.ds + .tab { padding-left: 6px; }
.tab.last { width: 70px; }
.tab.new { width: 32px; padding: 0; }
.tab.new:last-child { border-right: 0; }
.status { height: 20px; display: flex; background: #eaeaea; color: #222; line-height: 20px; font-size: 11.500px; padding-left: 3px; gap: 17.500px; }

.taskbar { height: 40px; display: flex; color: #fff; background: linear-gradient(90deg, #142624 0, #1d2b2a 400px, #1e1f1b 530px, #1c1715 640px, #0d0d10 800px, #30222a 900px, #382c35 1040px, #38292f 1366px); font: 400 12px/16px "Open Sans", sans-serif; }
.tb-search { width: 344px; display: flex; align-items: center; background: #f1f1f1; color: #333; font-size: 14.500px; border-top: 1px solid #c6c6c6; }
.tb-search span { flex: none; }
.tb-search svg:last-child { margin-left: auto; }
.tb-active { width: 48px; background: #414245; border-bottom: 2px solid #f7c6a4; }
.lang { width: 34px; line-height: 40px; padding-left: 1px; }
.clock { width: 64px; padding: 3px 0 0; display: flex; flex-direction: column; align-items: center; gap: 2px; }
.notice { width: 56px; display: flex; justify-content: flex-end; }
.count { font: 700 12px "Open Sans", sans-serif; fill: #fff; }
</style>
